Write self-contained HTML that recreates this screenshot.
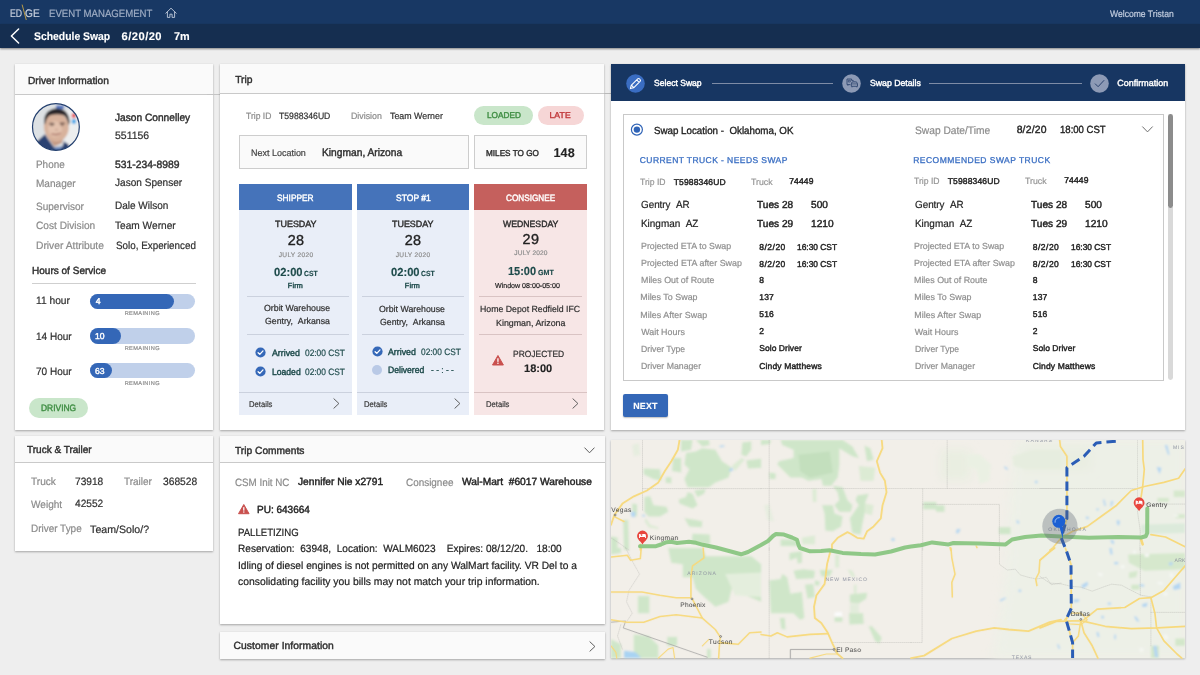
<!DOCTYPE html>
<html lang="en"><head><meta charset="utf-8"><title>Schedule Swap</title>
<style>
html,body{margin:0;padding:0}
body{width:1200px;height:675px;background:#eeeeee;position:relative;overflow:hidden;will-change:transform;text-rendering:geometricPrecision;font-family:"Liberation Sans",sans-serif;}
.t{position:absolute;white-space:pre;line-height:1;display:block;transform-origin:0 0}
.a{position:absolute;box-sizing:border-box}
.card{position:absolute;background:#fff;box-shadow:0 1px 2px rgba(0,0,0,.3),0 0 1px rgba(0,0,0,.07)}
.hd{position:absolute;left:0;top:0;right:0;background:#fafafa;border-bottom:1px solid #c9c9c9;box-sizing:border-box}
svg{position:absolute;overflow:visible}
</style></head><body>
<div class="a" style="left:0;top:0;width:1200px;height:24px;background:#183864"></div>
<div class="a" style="left:0;top:24px;width:1200px;height:24px;background:#152e50;box-shadow:0 1px 2px rgba(0,0,0,.45)"></div>
<span class="t" id="t0" style="left:10.09px;top:9.00px;font-size:11px;color:#ccd3df;-webkit-text-stroke:0.2px;transform:scaleX(0.7879);">ED</span>
<span class="t" id="t1" style="left:24.54px;top:9.00px;font-size:11px;color:#ccd3df;-webkit-text-stroke:0.2px;transform:scaleX(0.9204);">GE</span>
<svg style="left:0;top:0" width="60" height="24"><line x1="22.1" y1="4.6" x2="26.3" y2="20" stroke="#b89a45" stroke-width="1"/></svg>
<span class="t" id="t2" style="left:49.12px;top:9.00px;font-size:10.5px;color:#9fadc4;-webkit-text-stroke:0.2px;transform:scaleX(0.9152);">EVENT MANAGEMENT</span>
<svg style="left:165px;top:7px" width="12" height="12" viewBox="0 0 12 12"><path d="M0.8 6.2 L6 1.2 L11.2 6.2 M2.4 5 V10.4 H4.9 V7.2 H7.1 V10.4 H9.6 V5" fill="none" stroke="#c3cddd" stroke-width="0.9" stroke-linejoin="round" stroke-linecap="round"/></svg>
<span class="t" id="t3" style="left:1110.18px;top:10.00px;font-size:9.5px;color:#c3cddf;-webkit-text-stroke:0.2px;transform:scaleX(0.9037);">Welcome Tristan</span>
<svg style="left:8px;top:26px" width="14" height="20" viewBox="0 0 14 20"><path d="M10.6 3 L3.4 10 L10.6 17" fill="none" stroke="#fff" stroke-width="1.5" stroke-linecap="round" stroke-linejoin="round"/></svg>
<span class="t" id="t4" style="left:33.58px;top:32.00px;font-size:11.2px;color:#fff;font-weight:700;-webkit-text-stroke:0.12px;transform:scaleX(0.9284);">Schedule Swap</span>
<span class="t" id="t5" style="left:121.58px;top:32.00px;font-size:11.2px;color:#fff;font-weight:700;-webkit-text-stroke:0.12px;letter-spacing:0.446px;">6/20/20</span>
<span class="t" id="t6" style="left:173.58px;top:32.00px;font-size:11.2px;color:#fff;font-weight:700;-webkit-text-stroke:0.12px;transform:scaleX(0.9707);">7m</span>
<div class="card" style="left:15px;top:64px;width:198px;height:366px"><div class="hd" style="height:31px"></div></div>
<div class="a" style="left:207px;top:94px;width:14px;height:1px;background:#c4c4c4"></div>
<span class="t" id="t7" style="left:28.13px;top:77.00px;font-size:10.3px;color:#2f2f2f;-webkit-text-stroke:0.42px;transform:scaleX(0.9888);">Driver Information</span>
<svg style="left:31px;top:102px" width="50" height="50" viewBox="0 0 50 50">
<defs><clipPath id="avc"><circle cx="24.9" cy="25" r="23.3"/></clipPath><filter id="avb" x="-10%" y="-10%" width="120%" height="120%"><feGaussianBlur stdDeviation="0.8"/></filter></defs>
<g clip-path="url(#avc)"><g filter="url(#avb)">
<rect x="-2" y="-2" width="54" height="54" fill="#dde1e4"/>
<rect x="34" y="8" width="18" height="40" fill="#eceeef"/>
<rect x="25" y="3.4" width="8" height="3.4" fill="#4c70c0"/>
<rect x="40.8" y="11.2" width="4" height="4.8" rx="1.5" fill="#e8525c"/>
<rect x="40.8" y="17" width="4.2" height="4.8" rx="1.5" fill="#4ba9e8"/>
<path d="M-2 52 V44 L7 38.6 L14 32.3 L17 37 L23.3 45.7 L31.3 44.8 L33.1 39.4 L37.6 42.6 L39 52 Z" fill="#2c4372"/>
<path d="M15.5 31 L16.5 35 L23.3 44.6 L31 41 L33 33 Z" fill="#c39a84"/>
<path d="M23 45.2 L31.3 44.6 L30 48 L25 49 Z" fill="#5f7fb5"/>
<ellipse cx="25.3" cy="25" rx="12.4" ry="14.6" fill="#d8b29c" transform="rotate(-6 25.3 25)"/>
<ellipse cx="24" cy="27" rx="7" ry="8" fill="#e3c2ae" transform="rotate(-6 24 27)"/>
<path d="M13.6 22.5 Q11.5 9 24 6.6 Q37.5 5.6 38.6 20 L37.6 23.5 Q36.8 16.5 33.2 13.4 Q26 10.8 18.6 13.6 Q15 16.5 14.4 21.5 Z" fill="#2b2829"/>
<path d="M20.4 32 Q25.2 34.4 29.8 31.2 Q25.4 33 20.4 32Z" fill="#9c5f54" stroke="#9c5f54" stroke-width="0.6"/>
<path d="M18.4 21.9 Q20.8 20.9 23.3 21.9 M28.7 21.5 Q31.4 20.5 34 21.5" stroke="#4a342c" stroke-width="1.2" fill="none"/>
<path d="M19.4 23.3 h3 M29.6 23 h3" stroke="#3d2a25" stroke-width="0.9"/>
<path d="M24.4 27.6 q1 0.8 2.2 0" stroke="#a97d69" stroke-width="0.8" fill="none"/>
</g></g>
<circle cx="24.9" cy="25" r="23.4" fill="none" stroke="#233f6e" stroke-width="1.2"/></svg>
<span class="t" id="t8" style="left:114.61px;top:113.00px;font-size:10.6px;color:#2f2f2f;-webkit-text-stroke:0.42px;transform:scaleX(0.9597);">Jason Connelley</span>
<span class="t" id="t9" style="left:114.61px;top:131.00px;font-size:10.6px;color:#2f2f2f;-webkit-text-stroke:0.2px;transform:scaleX(0.9883);">551156</span>
<span class="t" id="t10" style="left:35.61px;top:160.00px;font-size:10.6px;color:#8b8b8b;-webkit-text-stroke:0.2px;transform:scaleX(0.9358);">Phone</span>
<span class="t" id="t11" style="left:114.61px;top:160.00px;font-size:10.6px;color:#2f2f2f;-webkit-text-stroke:0.42px;transform:scaleX(0.9764);">531-234-8989</span>
<span class="t" id="t12" style="left:35.61px;top:179.00px;font-size:10.6px;color:#8b8b8b;-webkit-text-stroke:0.2px;transform:scaleX(0.9489);">Manager</span>
<span class="t" id="t13" style="left:114.61px;top:178.00px;font-size:10.6px;color:#2f2f2f;-webkit-text-stroke:0.2px;transform:scaleX(0.9505);">Jason Spenser</span>
<span class="t" id="t14" style="left:35.61px;top:202.00px;font-size:10.6px;color:#8b8b8b;-webkit-text-stroke:0.2px;transform:scaleX(0.9464);">Supervisor</span>
<span class="t" id="t15" style="left:114.61px;top:201.00px;font-size:10.6px;color:#2f2f2f;-webkit-text-stroke:0.2px;transform:scaleX(0.9450);">Dale Wilson</span>
<span class="t" id="t16" style="left:35.61px;top:221.00px;font-size:10.6px;color:#8b8b8b;-webkit-text-stroke:0.2px;transform:scaleX(0.9571);">Cost Division</span>
<span class="t" id="t17" style="left:114.61px;top:221.00px;font-size:10.6px;color:#2f2f2f;-webkit-text-stroke:0.2px;transform:scaleX(0.9571);">Team Werner</span>
<span class="t" id="t18" style="left:35.61px;top:241.00px;font-size:10.6px;color:#8b8b8b;-webkit-text-stroke:0.2px;transform:scaleX(0.9695);">Driver Attribute</span>
<span class="t" id="t19" style="left:116.11px;top:241.00px;font-size:10.6px;color:#2f2f2f;-webkit-text-stroke:0.2px;transform:scaleX(0.9295);">Solo, Experienced</span>
<span class="t" id="t20" style="left:32.13px;top:267.00px;font-size:10.3px;color:#2f2f2f;-webkit-text-stroke:0.42px;transform:scaleX(0.9742);">Hours of Service</span>
<div class="a" style="left:32px;top:283px;width:164px;height:1px;background:#cfcfcf"></div>
<div class="a" style="left:89.5px;top:293.75px;width:105px;height:15.3px;border-radius:8px;background:#c0d0ea"></div>
<div class="a" style="left:89.5px;top:293.75px;width:84.3px;height:15.3px;border-radius:8px;background:#3467b7"></div>
<span class="t" id="t21" style="left:35.61px;top:296.00px;font-size:10.6px;color:#2f2f2f;-webkit-text-stroke:0.2px;transform:scaleX(0.9649);">11 hour</span>
<span class="t" id="t22" style="left:95.78px;top:297.00px;font-size:8.6px;color:#fff;-webkit-text-stroke:0.42px;">4</span>
<span class="t" id="t23" style="left:124.66px;top:312.00px;font-size:5.6px;color:#8e8e8e;-webkit-text-stroke:0.2px;letter-spacing:0.391px;">REMAINING</span>
<div class="a" style="left:89.5px;top:328.3px;width:105px;height:15.3px;border-radius:8px;background:#c0d0ea"></div>
<div class="a" style="left:89.5px;top:328.3px;width:31.3px;height:15.3px;border-radius:8px;background:#3467b7"></div>
<span class="t" id="t24" style="left:35.61px;top:332.00px;font-size:10.6px;color:#2f2f2f;-webkit-text-stroke:0.2px;transform:scaleX(0.9462);">14 Hour</span>
<span class="t" id="t25" style="left:94.98px;top:332.00px;font-size:8.6px;color:#fff;-webkit-text-stroke:0.42px;">10</span>
<span class="t" id="t26" style="left:124.66px;top:347.00px;font-size:5.6px;color:#8e8e8e;-webkit-text-stroke:0.2px;letter-spacing:0.391px;">REMAINING</span>
<div class="a" style="left:89.5px;top:362.5px;width:105px;height:15.3px;border-radius:8px;background:#c0d0ea"></div>
<div class="a" style="left:89.5px;top:362.5px;width:22px;height:15.3px;border-radius:8px;background:#3467b7"></div>
<span class="t" id="t27" style="left:35.61px;top:367.00px;font-size:10.6px;color:#2f2f2f;-webkit-text-stroke:0.2px;transform:scaleX(0.9462);">70 Hour</span>
<span class="t" id="t28" style="left:94.98px;top:367.00px;font-size:8.6px;color:#fff;-webkit-text-stroke:0.42px;">63</span>
<span class="t" id="t29" style="left:124.66px;top:382.00px;font-size:5.6px;color:#8e8e8e;-webkit-text-stroke:0.2px;letter-spacing:0.391px;">REMAINING</span>
<div class="a" style="left:29.2px;top:398px;width:58.6px;height:19.6px;border-radius:10px;background:#c9e6ca"></div>
<span class="t" id="t30" style="left:41.20px;top:404.00px;font-size:9.2px;color:#418f45;-webkit-text-stroke:0.42px;transform:scaleX(0.9170);">DRIVING</span>
<div class="card" style="left:15px;top:436px;width:198px;height:115px"><div class="hd" style="height:27px"></div></div>
<span class="t" id="t31" style="left:27.13px;top:446.00px;font-size:10.3px;color:#2f2f2f;-webkit-text-stroke:0.42px;transform:scaleX(0.9714);">Truck &amp; Trailer</span>
<span class="t" id="t32" style="left:30.61px;top:477.00px;font-size:10.6px;color:#8b8b8b;-webkit-text-stroke:0.2px;transform:scaleX(0.9552);">Truck</span>
<span class="t" id="t33" style="left:75.11px;top:477.00px;font-size:10.6px;color:#2f2f2f;-webkit-text-stroke:0.2px;transform:scaleX(0.9561);">73918</span>
<span class="t" id="t34" style="left:124.11px;top:477.00px;font-size:10.6px;color:#8b8b8b;-webkit-text-stroke:0.2px;transform:scaleX(0.9426);">Trailer</span>
<span class="t" id="t35" style="left:163.11px;top:477.00px;font-size:10.6px;color:#2f2f2f;-webkit-text-stroke:0.2px;transform:scaleX(0.9665);">368528</span>
<span class="t" id="t36" style="left:30.61px;top:500.00px;font-size:10.6px;color:#8b8b8b;-webkit-text-stroke:0.2px;transform:scaleX(0.9510);">Weight</span>
<span class="t" id="t37" style="left:75.11px;top:499.00px;font-size:10.6px;color:#2f2f2f;-webkit-text-stroke:0.2px;transform:scaleX(0.9561);">42552</span>
<span class="t" id="t38" style="left:30.61px;top:524.00px;font-size:10.6px;color:#8b8b8b;-webkit-text-stroke:0.2px;transform:scaleX(0.9390);">Driver Type</span>
<span class="t" id="t39" style="left:90.11px;top:525.00px;font-size:10.6px;color:#2f2f2f;-webkit-text-stroke:0.2px;letter-spacing:0.003px;">Team/Solo/?</span>
<div class="card" style="left:220px;top:64px;width:384px;height:366px"><div class="hd" style="height:30px"></div></div>
<div class="a" style="left:604px;top:93px;width:13px;height:1px;background:#b9b9b9"></div>
<span class="t" id="t40" style="left:235.13px;top:76.00px;font-size:10.3px;color:#2f2f2f;-webkit-text-stroke:0.42px;letter-spacing:0.013px;">Trip</span>
<span class="t" id="t41" style="left:245.70px;top:112.00px;font-size:9.2px;color:#8b8b8b;-webkit-text-stroke:0.2px;transform:scaleX(0.9315);">Trip ID</span>
<span class="t" id="t42" style="left:279.20px;top:112.00px;font-size:9.2px;color:#2f2f2f;-webkit-text-stroke:0.2px;transform:scaleX(0.9398);">T5988346UD</span>
<span class="t" id="t43" style="left:350.70px;top:112.00px;font-size:9.2px;color:#8b8b8b;-webkit-text-stroke:0.2px;transform:scaleX(0.9595);">Division</span>
<span class="t" id="t44" style="left:390.20px;top:112.00px;font-size:9.2px;color:#2f2f2f;-webkit-text-stroke:0.2px;transform:scaleX(0.9615);">Team Werner</span>
<div class="a" style="left:474.3px;top:105.5px;width:58.4px;height:19.6px;border-radius:10px;background:#c9e6ca"></div>
<span class="t" id="t45" style="left:487.23px;top:111.00px;font-size:8.6px;color:#418f45;-webkit-text-stroke:0.42px;transform:scaleX(0.9576);">LOADED</span>
<div class="a" style="left:537.5px;top:105.5px;width:46px;height:19.6px;border-radius:10px;background:#f6d6d6"></div>
<span class="t" id="t46" style="left:549.48px;top:111.00px;font-size:8.6px;color:#c23c3e;-webkit-text-stroke:0.42px;letter-spacing:0.121px;">LATE</span>
<div class="a" style="left:239px;top:135px;width:230px;height:34px;background:#fafafa;border:1px solid #cdcdcd"></div>
<div class="a" style="left:474px;top:135px;width:112.5px;height:34px;background:#fafafa;border:1px solid #cdcdcd"></div>
<span class="t" id="t47" style="left:250.69px;top:149.00px;font-size:9.3px;color:#444;-webkit-text-stroke:0.2px;transform:scaleX(0.9650);">Next Location</span>
<span class="t" id="t48" style="left:321.60px;top:148.00px;font-size:10.8px;color:#2f2f2f;-webkit-text-stroke:0.42px;transform:scaleX(0.9475);">Kingman, Arizona</span>
<span class="t" id="t49" style="left:485.73px;top:149.00px;font-size:8.6px;color:#2f2f2f;-webkit-text-stroke:0.42px;transform:scaleX(0.9511);">MILES TO GO</span>
<span class="t" id="t50" style="left:553.49px;top:147.00px;font-size:12.6px;color:#222;font-weight:700;-webkit-text-stroke:0.12px;letter-spacing:0.079px;">148</span>
<div class="a" style="left:239.2px;top:184.2px;width:112.5px;height:231.2px;background:#e9eef8"></div>
<div class="a" style="left:239.2px;top:184.2px;width:112.5px;height:26px;background:#4573ba"></div>
<span class="t" id="t51" style="left:277.20px;top:194.00px;font-size:9.2px;color:#fff;-webkit-text-stroke:0.42px;transform:scaleX(0.9076);">SHIPPER</span>
<div class="a" style="left:246.7px;top:295.5px;width:102.4px;height:1px;background:#cbd1de"></div>
<div class="a" style="left:246.7px;top:334px;width:102.4px;height:1px;background:#cbd1de"></div>
<div class="a" style="left:239.2px;top:392px;width:112.5px;height:1px;background:#cbd1de"></div>
<div class="a" style="left:356.8px;top:184.2px;width:112.3px;height:231.2px;background:#e9eef8"></div>
<div class="a" style="left:356.8px;top:184.2px;width:112.3px;height:26px;background:#4573ba"></div>
<span class="t" id="t52" style="left:396.20px;top:194.00px;font-size:9.2px;color:#fff;-webkit-text-stroke:0.42px;transform:scaleX(0.9306);">STOP #1</span>
<div class="a" style="left:362px;top:295.5px;width:102.4px;height:1px;background:#cbd1de"></div>
<div class="a" style="left:362px;top:334px;width:102.4px;height:1px;background:#cbd1de"></div>
<div class="a" style="left:356.8px;top:392px;width:112.3px;height:1px;background:#cbd1de"></div>
<div class="a" style="left:474.3px;top:184.2px;width:112.5px;height:231.2px;background:#f7e6e6"></div>
<div class="a" style="left:474.3px;top:184.2px;width:112.5px;height:26px;background:#c5605d"></div>
<span class="t" id="t53" style="left:506.20px;top:194.00px;font-size:9.2px;color:#fff;-webkit-text-stroke:0.42px;transform:scaleX(0.8908);">CONSIGNEE</span>
<div class="a" style="left:479.4px;top:295.5px;width:102.4px;height:1px;background:#d9c3c3"></div>
<div class="a" style="left:479.4px;top:334px;width:102.4px;height:1px;background:#d9c3c3"></div>
<div class="a" style="left:474.3px;top:392px;width:112.5px;height:1px;background:#d9c3c3"></div>
<span class="t" id="t54" style="left:275.21px;top:220.00px;font-size:9.0px;color:#2f2f2f;-webkit-text-stroke:0.42px;transform:scaleX(0.9932);">TUESDAY</span>
<span class="t" id="t55" style="left:287.69px;top:234.00px;font-size:14.4px;color:#222;letter-spacing:0.380px;-webkit-text-stroke:0.35px #222;">28</span>
<span class="t" id="t56" style="left:278.75px;top:253.00px;font-size:6.6px;color:#8d8d8d;-webkit-text-stroke:0.2px;letter-spacing:0.294px;">JULY 2020</span>
<span class="t" id="t57" style="left:273.85px;top:267.00px;font-size:11.7px;color:#1d4a4a;font-weight:700;-webkit-text-stroke:0.12px;transform:scaleX(0.9553);">02:00</span>
<span class="t" id="t58" style="left:303.86px;top:270.00px;font-size:7.4px;color:#1d4a4a;font-weight:700;-webkit-text-stroke:0.12px;transform:scaleX(0.9256);">CST</span>
<span class="t" id="t59" style="left:287.87px;top:282.00px;font-size:7.2px;color:#1d4a4a;-webkit-text-stroke:0.42px;letter-spacing:0.178px;">Firm</span>
<span class="t" id="t60" style="left:264.22px;top:304.00px;font-size:8.9px;color:#2f2f2f;-webkit-text-stroke:0.2px;transform:scaleX(0.9909);">Orbit Warehouse</span>
<span class="t" id="t61" style="left:265.02px;top:317.00px;font-size:8.9px;color:#2f2f2f;-webkit-text-stroke:0.2px;transform:scaleX(0.9836);">Gentry, &nbsp;Arkansa</span>
<span class="t" id="t62" style="left:392.21px;top:220.00px;font-size:9.0px;color:#2f2f2f;-webkit-text-stroke:0.42px;transform:scaleX(0.9908);">TUESDAY</span>
<span class="t" id="t63" style="left:404.69px;top:234.00px;font-size:14.4px;color:#222;letter-spacing:0.380px;-webkit-text-stroke:0.35px #222;">28</span>
<span class="t" id="t64" style="left:395.75px;top:253.00px;font-size:6.6px;color:#8d8d8d;-webkit-text-stroke:0.2px;letter-spacing:0.294px;">JULY 2020</span>
<span class="t" id="t65" style="left:390.85px;top:267.00px;font-size:11.7px;color:#1d4a4a;font-weight:700;-webkit-text-stroke:0.12px;transform:scaleX(0.9553);">02:00</span>
<span class="t" id="t66" style="left:420.86px;top:270.00px;font-size:7.4px;color:#1d4a4a;font-weight:700;-webkit-text-stroke:0.12px;transform:scaleX(0.9256);">CST</span>
<span class="t" id="t67" style="left:404.87px;top:282.00px;font-size:7.2px;color:#1d4a4a;-webkit-text-stroke:0.42px;letter-spacing:0.178px;">Firm</span>
<span class="t" id="t68" style="left:379.22px;top:305.00px;font-size:8.9px;color:#2f2f2f;-webkit-text-stroke:0.2px;transform:scaleX(0.9879);">Orbit Warehouse</span>
<span class="t" id="t69" style="left:380.22px;top:318.00px;font-size:8.9px;color:#2f2f2f;-webkit-text-stroke:0.2px;transform:scaleX(0.9836);">Gentry, &nbsp;Arkansa</span>
<span class="t" id="t70" style="left:503.41px;top:220.00px;font-size:9.0px;color:#2f2f2f;-webkit-text-stroke:0.42px;transform:scaleX(0.9654);">WEDNESDAY</span>
<span class="t" id="t71" style="left:522.49px;top:233.00px;font-size:14.4px;color:#222;letter-spacing:0.430px;-webkit-text-stroke:0.35px #222;">29</span>
<span class="t" id="t72" style="left:514.35px;top:251.00px;font-size:6.6px;color:#8d8d8d;-webkit-text-stroke:0.2px;letter-spacing:0.139px;">JULY 2020</span>
<span class="t" id="t73" style="left:507.70px;top:266.00px;font-size:11.7px;color:#1d4a4a;font-weight:700;-webkit-text-stroke:0.12px;transform:scaleX(0.9385);">15:00</span>
<span class="t" id="t74" style="left:537.86px;top:269.00px;font-size:7.4px;color:#1d4a4a;font-weight:700;-webkit-text-stroke:0.12px;transform:scaleX(0.9619);">GMT</span>
<span class="t" id="t75" style="left:494.52px;top:282.00px;font-size:7.2px;color:#222;transform:scaleX(0.9841);-webkit-text-stroke:0.18px #222;">Window 08:00-05:00</span>
<span class="t" id="t76" style="left:480.42px;top:305.00px;font-size:8.9px;color:#2f2f2f;-webkit-text-stroke:0.2px;transform:scaleX(0.9846);">Home Depot Redfield IFC</span>
<span class="t" id="t77" style="left:496.02px;top:319.00px;font-size:8.9px;color:#2f2f2f;-webkit-text-stroke:0.2px;transform:scaleX(0.9985);">Kingman, Arizona</span>
<svg style="left:255.2px;top:347.1px" width="11" height="11" viewBox="0 0 11 11"><circle cx="5.5" cy="5.5" r="5.1" fill="#3568b8"/><path d="M3.1 5.7 L4.8 7.4 L8 3.9" fill="none" stroke="#fff" stroke-width="1.3" stroke-linecap="round" stroke-linejoin="round"/></svg>
<svg style="left:255.2px;top:366.2px" width="11" height="11" viewBox="0 0 11 11"><circle cx="5.5" cy="5.5" r="5.1" fill="#3568b8"/><path d="M3.1 5.7 L4.8 7.4 L8 3.9" fill="none" stroke="#fff" stroke-width="1.3" stroke-linecap="round" stroke-linejoin="round"/></svg>
<span class="t" id="t78" style="left:272.20px;top:349.00px;font-size:9.2px;color:#1d4a4a;-webkit-text-stroke:0.42px;transform:scaleX(0.9574);">Arrived</span>
<span class="t" id="t79" style="left:305.20px;top:349.00px;font-size:9.2px;color:#1d4a4a;-webkit-text-stroke:0.2px;transform:scaleX(0.9100);">02:00 CST</span>
<span class="t" id="t80" style="left:272.20px;top:368.00px;font-size:9.2px;color:#1d4a4a;-webkit-text-stroke:0.42px;transform:scaleX(0.9347);">Loaded</span>
<span class="t" id="t81" style="left:305.40px;top:368.00px;font-size:9.2px;color:#1d4a4a;-webkit-text-stroke:0.2px;transform:scaleX(0.9100);">02:00 CST</span>
<svg style="left:371.9px;top:346.2px" width="11" height="11" viewBox="0 0 11 11"><circle cx="5.5" cy="5.5" r="5.1" fill="#3568b8"/><path d="M3.1 5.7 L4.8 7.4 L8 3.9" fill="none" stroke="#fff" stroke-width="1.3" stroke-linecap="round" stroke-linejoin="round"/></svg>
<div class="a" style="left:371.7px;top:365px;width:10px;height:10px;border-radius:5px;background:#b9c9e6"></div>
<span class="t" id="t82" style="left:387.75px;top:348.00px;font-size:9.2px;color:#1d4a4a;-webkit-text-stroke:0.42px;transform:scaleX(0.9574);">Arrived</span>
<span class="t" id="t83" style="left:420.80px;top:348.00px;font-size:9.2px;color:#1d4a4a;-webkit-text-stroke:0.2px;transform:scaleX(0.9054);">02:00 CST</span>
<span class="t" id="t84" style="left:387.75px;top:366.00px;font-size:9.2px;color:#1d4a4a;-webkit-text-stroke:0.42px;transform:scaleX(0.9344);">Delivered</span>
<span class="t" id="t85" style="left:431.20px;top:366.00px;font-size:9.2px;color:#1d4a4a;-webkit-text-stroke:0.2px;transform:scaleX(0.9141);">- - : - -</span>
<svg style="left:491.5px;top:354.7px" width="11.9" height="10.5" viewBox="0 0 12 10.6"><path d="M6 0.5 L11.5 10.1 H0.5 Z" fill="#c9504e" stroke="#c9504e" stroke-width="1" stroke-linejoin="round"/><rect x="5.35" y="3.3" width="1.3" height="3.6" fill="#fff"/><rect x="5.35" y="7.7" width="1.3" height="1.3" fill="#fff"/></svg>
<span class="t" id="t86" style="left:512.86px;top:350.00px;font-size:9.0px;color:#2f2f2f;-webkit-text-stroke:0.2px;transform:scaleX(0.9384);">PROJECTED</span>
<span class="t" id="t87" style="left:524.09px;top:364.00px;font-size:11px;color:#222;font-weight:700;-webkit-text-stroke:0.12px;">18:00</span>
<span class="t" id="t88" style="left:248.76px;top:401.00px;font-size:8.2px;color:#3a3a3a;-webkit-text-stroke:0.2px;transform:scaleX(0.9360);">Details</span>
<svg style="left:333.2px;top:398.3px" width="7" height="11" viewBox="0 0 7 11"><path d="M0.9 0.8 L5.9 5.5 L0.9 10.2" fill="none" stroke="#555" stroke-width="0.95" stroke-linecap="round" stroke-linejoin="round"/></svg>
<span class="t" id="t89" style="left:363.91px;top:401.00px;font-size:8.2px;color:#3a3a3a;-webkit-text-stroke:0.2px;transform:scaleX(0.9360);">Details</span>
<svg style="left:453.8px;top:398.3px" width="7" height="11" viewBox="0 0 7 11"><path d="M0.9 0.8 L5.9 5.5 L0.9 10.2" fill="none" stroke="#555" stroke-width="0.95" stroke-linecap="round" stroke-linejoin="round"/></svg>
<span class="t" id="t90" style="left:485.86px;top:401.00px;font-size:8.2px;color:#3a3a3a;-webkit-text-stroke:0.2px;transform:scaleX(0.9360);">Details</span>
<svg style="left:571.6px;top:398.3px" width="7" height="11" viewBox="0 0 7 11"><path d="M0.9 0.8 L5.9 5.5 L0.9 10.2" fill="none" stroke="#555" stroke-width="0.95" stroke-linecap="round" stroke-linejoin="round"/></svg>
<div class="card" style="left:220px;top:436px;width:385px;height:188px"><div class="hd" style="height:27px"></div></div>
<span class="t" id="t91" style="left:235.13px;top:447.00px;font-size:10.3px;color:#2f2f2f;-webkit-text-stroke:0.42px;transform:scaleX(0.9916);">Trip Comments</span>
<svg style="left:584px;top:447px" width="11" height="7" viewBox="0 0 11 7"><path d="M0.8 0.9 L5.5 5.8 L10.2 0.9" fill="none" stroke="#555" stroke-width="0.95" stroke-linecap="round" stroke-linejoin="round"/></svg>
<span class="t" id="t92" style="left:235.11px;top:478.00px;font-size:10.6px;color:#8b8b8b;-webkit-text-stroke:0.2px;transform:scaleX(0.9244);">CSM Init NC</span>
<span class="t" id="t93" style="left:297.63px;top:478.00px;font-size:10.4px;color:#222;-webkit-text-stroke:0.42px;transform:scaleX(0.9828);">Jennifer Nie x2791</span>
<span class="t" id="t94" style="left:406.11px;top:478.00px;font-size:10.6px;color:#8b8b8b;-webkit-text-stroke:0.2px;transform:scaleX(0.9362);">Consignee</span>
<span class="t" id="t95" style="left:462.13px;top:478.00px;font-size:10.4px;color:#222;-webkit-text-stroke:0.42px;transform:scaleX(0.9837);">Wal-Mart &nbsp;#6017 Warehouse</span>
<svg style="left:237.6px;top:503.8px" width="11.6" height="10.2" viewBox="0 0 12 10.6"><path d="M6 0.5 L11.5 10.1 H0.5 Z" fill="#c9504e" stroke="#c9504e" stroke-width="1" stroke-linejoin="round"/><rect x="5.35" y="3.3" width="1.3" height="3.6" fill="#fff"/><rect x="5.35" y="7.7" width="1.3" height="1.3" fill="#fff"/></svg>
<span class="t" id="t96" style="left:257.13px;top:506.00px;font-size:10.4px;color:#222;-webkit-text-stroke:0.42px;transform:scaleX(0.9640);">PU: 643664</span>
<span class="t" id="t97" style="left:237.62px;top:528.00px;font-size:10.5px;color:#222;-webkit-text-stroke:0.2px;transform:scaleX(0.9147);">PALLETIZING</span>
<span class="t" id="t98" style="left:237.62px;top:544.00px;font-size:10.5px;color:#222;-webkit-text-stroke:0.2px;transform:scaleX(0.9605);">Reservation: &nbsp;63948, &nbsp;Location: &nbsp;WALM6023 &nbsp; &nbsp;Expires: 08/12/20. &nbsp; 18:00</span>
<span class="t" id="t99" style="left:237.62px;top:561.00px;font-size:10.5px;color:#222;-webkit-text-stroke:0.2px;transform:scaleX(0.9727);">Idling of diesel engines is not permitted on any WalMart facility. VR Del to a</span>
<span class="t" id="t100" style="left:237.62px;top:577.00px;font-size:10.5px;color:#222;-webkit-text-stroke:0.2px;transform:scaleX(0.9902);">consolidating facility you bills may not match your trip information.</span>
<div class="card" style="left:220px;top:632px;width:385px;height:27px;background:#fafafa"></div>
<span class="t" id="t101" style="left:233.53px;top:642.00px;font-size:10.3px;color:#2f2f2f;-webkit-text-stroke:0.42px;letter-spacing:0.070px;">Customer Information</span>
<svg style="left:589px;top:640.5px" width="7" height="11" viewBox="0 0 7 11"><path d="M0.9 0.8 L5.9 5.5 L0.9 10.2" fill="none" stroke="#555" stroke-width="0.95" stroke-linecap="round" stroke-linejoin="round"/></svg>
<div class="card" style="left:611px;top:64px;width:574px;height:366px"></div>
<div class="a" style="left:611px;top:64px;width:574px;height:37px;background:#173662"></div>
<svg style="left:626px;top:73.5px" width="19" height="19" viewBox="0 0 19 19"><circle cx="9.5" cy="9.5" r="9.3" fill="#3a6dc2"/>
<path d="M4.4 14.6 L5.2 11.4 L11.7 4.9 Q12.6 4 13.5 4.9 L14.1 5.5 Q15 6.4 14.1 7.3 L7.6 13.8 Z M5.9 11.7 L7.3 13.1 M10.7 5.9 L13.1 8.3" fill="none" stroke="#fff" stroke-width="1.05" stroke-linejoin="round" stroke-linecap="round"/></svg>
<span class="t" id="t102" style="left:654.22px;top:79.00px;font-size:8.9px;color:#fff;-webkit-text-stroke:0.42px;transform:scaleX(0.9648);">Select Swap</span>
<div class="a" style="left:711.7px;top:83px;width:121.5px;height:1px;background:#7e8ca6"></div>
<svg style="left:842px;top:73.5px" width="19" height="19" viewBox="0 0 19 19"><circle cx="9.5" cy="9.5" r="9.3" fill="#8d9ab5"/>
<g fill="none" stroke="#2b426d" stroke-width="0.85" stroke-linejoin="round">
<path d="M5 10.6 V5 H9.6 V6.4 H11.2 L12 7.6"/><path d="M6.3 6.3 H8.3 V8 H6.3Z" stroke-width="0.7"/><path d="M5 10.6 H8.4"/>
<path d="M9.3 12.3 V9.9 L10.2 7.9 H14.5 L15.5 9.9 V12.3 Z" fill="#8d9ab5"/><path d="M9.5 9.9 H15.3" stroke-width="0.7"/>
<path d="M10 12.4 V13.2 M14.8 12.4 V13.2 M5.9 10.8 V11.5" stroke-width="1.1"/></g></svg>
<span class="t" id="t103" style="left:870.22px;top:79.00px;font-size:8.9px;color:#fff;-webkit-text-stroke:0.42px;transform:scaleX(0.9818);">Swap Details</span>
<div class="a" style="left:928.7px;top:83px;width:153.8px;height:1px;background:#7e8ca6"></div>
<svg style="left:1090px;top:73.5px" width="19" height="19" viewBox="0 0 19 19"><circle cx="9.5" cy="9.5" r="9.3" fill="#8d9ab5"/>
<path d="M5.3 9.9 L8.1 12.7 L13.9 6.5" fill="none" stroke="#2b426d" stroke-width="1" stroke-linecap="round" stroke-linejoin="round"/></svg>
<span class="t" id="t104" style="left:1117.22px;top:79.00px;font-size:8.9px;color:#fff;-webkit-text-stroke:0.42px;letter-spacing:0.066px;">Confirmation</span>
<div class="a" style="left:623px;top:114px;width:540.5px;height:266.5px;border:1px solid #c9c9c9;background:#fff"></div>
<div class="a" style="left:1168.2px;top:207px;width:4.8px;height:173px;border-radius:0 0 2.4px 2.4px;background:#d9d9d9"></div>
<div class="a" style="left:1168.2px;top:114px;width:4.8px;height:94px;border-radius:2.4px;background:#8c8c8c"></div>
<svg style="left:630px;top:123px" width="14" height="14" viewBox="0 0 14 14"><circle cx="6.9" cy="6.6" r="5.5" fill="#fff" stroke="#2f63b6" stroke-width="1.2"/><circle cx="6.9" cy="6.6" r="3.2" fill="#2f63b6"/></svg>
<span class="t" id="t105" style="left:654.13px;top:127.00px;font-size:10.3px;color:#1f1f1f;-webkit-text-stroke:0.3px;transform:scaleX(0.9478);-webkit-text-stroke:0.36px #1f1f1f;">Swap Location - &nbsp;Oklahoma, OK</span>
<span class="t" id="t106" style="left:914.60px;top:126.00px;font-size:10.9px;color:#8b8b8b;-webkit-text-stroke:0.2px;transform:scaleX(0.9385);">Swap Date/Time</span>
<span class="t" id="t107" style="left:1016.63px;top:126.00px;font-size:10.4px;color:#1f1f1f;letter-spacing:0.213px;-webkit-text-stroke:0.36px #1f1f1f;">8/2/20</span>
<span class="t" id="t108" style="left:1060.13px;top:126.00px;font-size:10.4px;color:#1f1f1f;transform:scaleX(0.9194);-webkit-text-stroke:0.36px #1f1f1f;">18:00 CST</span>
<svg style="left:1141.5px;top:126.3px" width="11" height="7" viewBox="0 0 11 7"><path d="M0.6 0.8 L5.5 5.9 L10.4 0.8" fill="none" stroke="#666" stroke-width="0.95" stroke-linecap="round" stroke-linejoin="round"/></svg>
<span class="t" id="t109" style="left:639.74px;top:156.00px;font-size:8.5px;color:#3b6fc3;-webkit-text-stroke:0.3px;letter-spacing:0.434px;">CURRENT TRUCK - NEEDS SWAP</span>
<span class="t" id="t110" style="left:639.71px;top:178.00px;font-size:9.0px;color:#959595;-webkit-text-stroke:0.2px;transform:scaleX(0.9602);">Trip ID</span>
<span class="t" id="t111" style="left:673.74px;top:178.00px;font-size:8.5px;color:#222;-webkit-text-stroke:0.42px;letter-spacing:0.153px;">T5988346UD</span>
<span class="t" id="t112" style="left:751.21px;top:178.00px;font-size:9.0px;color:#959595;-webkit-text-stroke:0.2px;transform:scaleX(0.9747);">Truck</span>
<span class="t" id="t113" style="left:789.24px;top:177.00px;font-size:8.5px;color:#222;-webkit-text-stroke:0.42px;letter-spacing:0.140px;">74449</span>
<span class="t" id="t114" style="left:641.13px;top:201.00px;font-size:10.4px;color:#222;-webkit-text-stroke:0.2px;transform:scaleX(0.9470);">Gentry &nbsp;AR</span>
<span class="t" id="t115" style="left:757.14px;top:201.00px;font-size:10.2px;color:#222;-webkit-text-stroke:0.42px;transform:scaleX(0.9923);">Tues 28</span>
<span class="t" id="t116" style="left:811.14px;top:201.00px;font-size:10.2px;color:#222;-webkit-text-stroke:0.42px;transform:scaleX(0.9946);">500</span>
<span class="t" id="t117" style="left:641.13px;top:220.00px;font-size:10.4px;color:#222;-webkit-text-stroke:0.2px;transform:scaleX(0.9559);">Kingman &nbsp;AZ</span>
<span class="t" id="t118" style="left:757.14px;top:220.00px;font-size:10.2px;color:#222;-webkit-text-stroke:0.42px;transform:scaleX(0.9923);">Tues 29</span>
<span class="t" id="t119" style="left:811.14px;top:220.00px;font-size:10.2px;color:#222;-webkit-text-stroke:0.42px;transform:scaleX(0.9994);">1210</span>
<span class="t" id="t120" style="left:640.72px;top:242.00px;font-size:8.9px;color:#8f8f8f;-webkit-text-stroke:0.2px;transform:scaleX(0.9944);">Projected ETA to Swap</span>
<span class="t" id="t121" style="left:759.24px;top:243.00px;font-size:8.5px;color:#222;-webkit-text-stroke:0.42px;letter-spacing:0.492px;">8/2/20</span>
<span class="t" id="t122" style="left:796.74px;top:243.00px;font-size:8.5px;color:#222;-webkit-text-stroke:0.42px;transform:scaleX(0.9865);">16:30 CST</span>
<span class="t" id="t123" style="left:640.72px;top:259.00px;font-size:8.9px;color:#8f8f8f;-webkit-text-stroke:0.2px;transform:scaleX(0.9989);">Projected ETA after Swap</span>
<span class="t" id="t124" style="left:759.24px;top:260.00px;font-size:8.5px;color:#222;-webkit-text-stroke:0.42px;letter-spacing:0.492px;">8/2/20</span>
<span class="t" id="t125" style="left:796.74px;top:260.00px;font-size:8.5px;color:#222;-webkit-text-stroke:0.42px;transform:scaleX(0.9865);">16:30 CST</span>
<span class="t" id="t126" style="left:640.72px;top:276.00px;font-size:8.9px;color:#8f8f8f;-webkit-text-stroke:0.2px;transform:scaleX(0.9980);">Miles Out of Route</span>
<span class="t" id="t127" style="left:759.24px;top:276.00px;font-size:8.5px;color:#222;-webkit-text-stroke:0.42px;">8</span>
<span class="t" id="t128" style="left:640.22px;top:293.00px;font-size:8.9px;color:#8f8f8f;-webkit-text-stroke:0.2px;letter-spacing:0.023px;">Miles To Swap</span>
<span class="t" id="t129" style="left:759.24px;top:293.00px;font-size:8.5px;color:#222;-webkit-text-stroke:0.42px;letter-spacing:0.217px;">137</span>
<span class="t" id="t130" style="left:640.22px;top:311.00px;font-size:8.9px;color:#8f8f8f;-webkit-text-stroke:0.2px;letter-spacing:0.063px;">Miles After Swap</span>
<span class="t" id="t131" style="left:759.24px;top:310.00px;font-size:8.5px;color:#222;-webkit-text-stroke:0.42px;letter-spacing:0.217px;">516</span>
<span class="t" id="t132" style="left:641.22px;top:328.00px;font-size:8.9px;color:#8f8f8f;-webkit-text-stroke:0.2px;letter-spacing:0.004px;">Wait Hours</span>
<span class="t" id="t133" style="left:759.24px;top:327.00px;font-size:8.5px;color:#222;-webkit-text-stroke:0.42px;">2</span>
<span class="t" id="t134" style="left:641.22px;top:345.00px;font-size:8.9px;color:#8f8f8f;-webkit-text-stroke:0.2px;transform:scaleX(0.9754);">Driver Type</span>
<span class="t" id="t135" style="left:759.24px;top:344.00px;font-size:8.5px;color:#222;-webkit-text-stroke:0.42px;letter-spacing:0.049px;">Solo Driver</span>
<span class="t" id="t136" style="left:641.22px;top:362.00px;font-size:8.9px;color:#8f8f8f;-webkit-text-stroke:0.2px;transform:scaleX(0.9826);">Driver Manager</span>
<span class="t" id="t137" style="left:759.24px;top:362.00px;font-size:8.5px;color:#222;-webkit-text-stroke:0.42px;letter-spacing:0.152px;">Cindy Matthews</span>
<span class="t" id="t138" style="left:913.24px;top:156.00px;font-size:8.5px;color:#3b6fc3;-webkit-text-stroke:0.3px;letter-spacing:0.475px;">RECOMMENDED SWAP TRUCK</span>
<span class="t" id="t139" style="left:913.71px;top:177.00px;font-size:9.0px;color:#959595;-webkit-text-stroke:0.2px;transform:scaleX(0.9602);">Trip ID</span>
<span class="t" id="t140" style="left:947.74px;top:177.00px;font-size:8.5px;color:#222;-webkit-text-stroke:0.42px;letter-spacing:0.153px;">T5988346UD</span>
<span class="t" id="t141" style="left:1025.21px;top:177.00px;font-size:9.0px;color:#959595;-webkit-text-stroke:0.2px;transform:scaleX(0.9747);">Truck</span>
<span class="t" id="t142" style="left:1064.24px;top:176.00px;font-size:8.5px;color:#222;-webkit-text-stroke:0.42px;letter-spacing:0.140px;">74449</span>
<span class="t" id="t143" style="left:914.63px;top:201.00px;font-size:10.4px;color:#222;-webkit-text-stroke:0.2px;transform:scaleX(0.9470);">Gentry &nbsp;AR</span>
<span class="t" id="t144" style="left:1030.64px;top:201.00px;font-size:10.2px;color:#222;-webkit-text-stroke:0.42px;transform:scaleX(0.9923);">Tues 28</span>
<span class="t" id="t145" style="left:1084.64px;top:201.00px;font-size:10.2px;color:#222;-webkit-text-stroke:0.42px;transform:scaleX(0.9946);">500</span>
<span class="t" id="t146" style="left:914.63px;top:220.00px;font-size:10.4px;color:#222;-webkit-text-stroke:0.2px;transform:scaleX(0.9559);">Kingman &nbsp;AZ</span>
<span class="t" id="t147" style="left:1030.64px;top:220.00px;font-size:10.2px;color:#222;-webkit-text-stroke:0.42px;transform:scaleX(0.9923);">Tues 29</span>
<span class="t" id="t148" style="left:1084.64px;top:220.00px;font-size:10.2px;color:#222;-webkit-text-stroke:0.42px;transform:scaleX(0.9994);">1210</span>
<span class="t" id="t149" style="left:914.22px;top:242.00px;font-size:8.9px;color:#8f8f8f;-webkit-text-stroke:0.2px;transform:scaleX(0.9944);">Projected ETA to Swap</span>
<span class="t" id="t150" style="left:1032.74px;top:243.00px;font-size:8.5px;color:#222;-webkit-text-stroke:0.42px;letter-spacing:0.492px;">8/2/20</span>
<span class="t" id="t151" style="left:1071.24px;top:243.00px;font-size:8.5px;color:#222;-webkit-text-stroke:0.42px;transform:scaleX(0.9865);">16:30 CST</span>
<span class="t" id="t152" style="left:914.22px;top:259.00px;font-size:8.9px;color:#8f8f8f;-webkit-text-stroke:0.2px;transform:scaleX(0.9989);">Projected ETA after Swap</span>
<span class="t" id="t153" style="left:1032.74px;top:260.00px;font-size:8.5px;color:#222;-webkit-text-stroke:0.42px;letter-spacing:0.492px;">8/2/20</span>
<span class="t" id="t154" style="left:1071.24px;top:260.00px;font-size:8.5px;color:#222;-webkit-text-stroke:0.42px;transform:scaleX(0.9865);">16:30 CST</span>
<span class="t" id="t155" style="left:914.22px;top:276.00px;font-size:8.9px;color:#8f8f8f;-webkit-text-stroke:0.2px;transform:scaleX(0.9980);">Miles Out of Route</span>
<span class="t" id="t156" style="left:1032.74px;top:276.00px;font-size:8.5px;color:#222;-webkit-text-stroke:0.42px;">8</span>
<span class="t" id="t157" style="left:914.22px;top:293.00px;font-size:8.9px;color:#8f8f8f;-webkit-text-stroke:0.2px;letter-spacing:0.023px;">Miles To Swap</span>
<span class="t" id="t158" style="left:1032.74px;top:293.00px;font-size:8.5px;color:#222;-webkit-text-stroke:0.42px;letter-spacing:0.217px;">137</span>
<span class="t" id="t159" style="left:914.22px;top:311.00px;font-size:8.9px;color:#8f8f8f;-webkit-text-stroke:0.2px;letter-spacing:0.063px;">Miles After Swap</span>
<span class="t" id="t160" style="left:1032.74px;top:310.00px;font-size:8.5px;color:#222;-webkit-text-stroke:0.42px;letter-spacing:0.217px;">516</span>
<span class="t" id="t161" style="left:914.72px;top:328.00px;font-size:8.9px;color:#8f8f8f;-webkit-text-stroke:0.2px;letter-spacing:0.004px;">Wait Hours</span>
<span class="t" id="t162" style="left:1032.74px;top:327.00px;font-size:8.5px;color:#222;-webkit-text-stroke:0.42px;">2</span>
<span class="t" id="t163" style="left:914.72px;top:345.00px;font-size:8.9px;color:#8f8f8f;-webkit-text-stroke:0.2px;transform:scaleX(0.9754);">Driver Type</span>
<span class="t" id="t164" style="left:1032.74px;top:344.00px;font-size:8.5px;color:#222;-webkit-text-stroke:0.42px;letter-spacing:0.049px;">Solo Driver</span>
<span class="t" id="t165" style="left:914.72px;top:362.00px;font-size:8.9px;color:#8f8f8f;-webkit-text-stroke:0.2px;transform:scaleX(0.9826);">Driver Manager</span>
<span class="t" id="t166" style="left:1032.74px;top:362.00px;font-size:8.5px;color:#222;-webkit-text-stroke:0.42px;letter-spacing:0.152px;">Cindy Matthews</span>
<div class="a" style="left:623px;top:394px;width:45px;height:22.8px;border-radius:2px;background:#3467b7;box-shadow:0 1px 1.5px rgba(0,0,0,.25)"></div>
<span class="t" id="t167" style="left:633.22px;top:402.00px;font-size:8.9px;color:#fff;font-weight:700;-webkit-text-stroke:0.12px;letter-spacing:0.171px;">NEXT</span>
<svg style="left:611px;top:440px;box-shadow:0 1px 2px rgba(0,0,0,.3)" width="574" height="218.3" viewBox="0 0 574 218.3">
<defs><clipPath id="mc"><rect x="0" y="0" width="574" height="218.3"/></clipPath>
<filter id="mb0" x="-5%" y="-5%" width="110%" height="110%"><feGaussianBlur stdDeviation="0.9"/></filter>
<filter id="mb1" x="-5%" y="-5%" width="110%" height="110%"><feGaussianBlur stdDeviation="0.55"/></filter>
<filter id="mb2" x="-5%" y="-5%" width="110%" height="110%"><feGaussianBlur stdDeviation="0.4"/></filter>
<filter id="mb3" x="-20%" y="-20%" width="140%" height="140%"><feGaussianBlur stdDeviation="5"/></filter></defs>
<g clip-path="url(#mc)" style="overflow:hidden">
<rect x="0" y="0" width="574" height="218.3" fill="#f2efe9"/>
<g filter="url(#mb0)">
<path d="M405 0 C 395 60 400 110 392 150 C 388 190 385 205 380 218 H574 V0 Z" fill="#edf0e7" filter="url(#mb3)"/>
<path d="M330 10 h30 v30 h-30z M410 8 h70 v22 h-70z" fill="#e9eee1" filter="url(#mb3)"/>
<polygon points="75.0,13.0 84.8,11.4 91.3,8.2 104.3,9.8 110.9,21.2 120.7,27.7 117.4,37.5 104.3,42.4 97.8,47.3 76.6,47.3 73.4,39.1 78.3,29.3 73.4,24.5" fill="#cfe6c9"/>
<polygon points="32.6,28.5 48.9,29.3 50.5,40.8 42.4,39.1 32.6,34.2" fill="#cfe6c9"/>
<polygon points="62.0,17.9 70.1,17.9 70.1,32.6 61.1,31.0" fill="#cfe6c9"/>
<polygon points="54.6,37.2 60.3,37.2 60.3,43.2 54.6,42.7" fill="#cfe6c9"/>
<polygon points="70.1,0.0 81.5,0.0 79.9,9.8 70.1,11.4" fill="#cfe6c9"/>
<polygon points="84.8,0.0 97.8,0.0 98.6,4.9 91.3,6.5" fill="#cfe6c9"/>
<polygon points="131.3,2.4 140.2,1.6 140.2,9.8 135.3,16.3 130.4,14.7" fill="#cfe6c9"/>
<polygon points="135.3,20.4 150.0,18.8 150.0,27.7 137.0,28.5" fill="#cfe6c9"/>
<polygon points="120.7,26.1 130.4,17.9 133.7,19.6 123.9,31.0" fill="#dcebd4"/>
<polygon points="76.6,52.2 81.5,53.8 86.4,65.2 81.5,68.5 68.5,63.6 67.7,59.5 75.0,57.1" fill="#cfe6c9"/>
<polygon points="83.2,50.5 94.6,48.9 92.9,53.8 86.4,57.1" fill="#cfe6c9"/>
<polygon points="33.4,57.1 39.1,56.3 42.4,65.2 55.4,66.8 57.1,71.7 48.9,76.6 37.5,76.6 33.4,71.7" fill="#cfe6c9"/>
<polygon points="73.4,78.3 84.8,79.9 91.3,81.5 90.5,87.2 78.3,86.4" fill="#cfe6c9"/>
<polygon points="81.5,93.8 98.6,94.6 99.1,104.3 80.7,103.5" fill="#cfe6c9"/>
<polygon points="12.2,79.9 17.1,79.9 17.9,110.1 13.0,110.1" fill="#cfe6c9"/>
<polygon points="0.0,96.2 6.5,97.8 6.5,110.1 0.0,110.1" fill="#cfe6c9"/>
<polygon points="21.2,63.6 26.1,64.4 25.8,76.6 21.5,75.8" fill="#cfe6c9"/>
<polygon points="35.1,78.3 39.1,84.8 47.3,87.2 47.3,88.9 37.5,87.2 33.4,80.7" fill="#dcebd4"/>
<polygon points="21.2,4.9 27.7,3.3 29.3,14.7 22.8,16.3" fill="#e6eddf"/>
<polygon points="57.1,108.0 91.3,108.0 94.6,116.2 140.2,116.2 150.0,124.3 150.0,161.8 138.6,156.9 120.7,148.8 117.4,161.8 104.3,166.7 91.3,155.3 84.8,148.8 81.5,137.3 71.7,137.3 71.7,124.3 60.3,122.7" fill="#cfe6c9"/>
<polygon points="114.1,134.1 150.0,132.5 150.0,156.9 123.9,155.3" fill="#e4eedd"/>
<polygon points="26.9,156.1 38.3,156.1 38.3,173.2 26.9,173.2" fill="#cfe6c9"/>
<polygon points="22.8,194.4 37.5,196.0 47.3,205.8 47.3,218.1 22.8,218.1" fill="#cfe6c9"/>
<polygon points="56.3,196.9 66.0,196.9 66.0,205.8 56.3,205.8" fill="#cfe6c9"/>
<polygon points="0.0,199.3 9.8,204.2 9.8,218.1 0.0,218.1" fill="#cfe6c9"/>
<polygon points="96.2,209.1 99.5,209.1 99.8,218.1 95.9,218.1" fill="#cfe6c9"/>
<polygon points="13.0,210.7 24.5,212.3 30.2,218.1 13.0,218.1" fill="#a9d3f2"/>
<polygon points="0.0,108.0 9.8,108.0 9.8,112.9 0.0,114.5" fill="#cfe6c9"/>
<polygon points="169.6,0.0 231.5,0.0 241.3,6.5 247.8,17.9 241.3,16.3 228.3,8.2 228.3,24.5 226.6,37.5 220.1,45.7 212.0,45.7 210.3,39.1 197.3,40.8 190.8,37.5 179.3,37.5 166.3,24.5 167.9,21.2 182.6,17.9 182.6,9.8 171.2,4.9" fill="#cfe6c9"/>
<polygon points="187.5,14.7 218.5,11.4 221.7,32.6 198.9,37.5 189.1,31.0" fill="#bddcb8" opacity="0.7"/>
<polygon points="221.7,45.7 231.5,47.3 236.4,60.3 241.3,65.2 239.7,71.7 228.3,71.7 223.4,65.2 228.3,60.3 226.6,52.2" fill="#cfe6c9"/>
<polygon points="211.1,65.2 221.7,65.2 223.4,73.4 231.5,76.6 229.9,86.4 221.7,91.3 214.4,90.5 213.6,73.4" fill="#cfe6c9"/>
<polygon points="246.2,55.4 257.6,53.8 254.3,62.0 254.3,70.1 251.1,84.8 249.5,94.6 241.3,92.9 238.9,78.3 244.6,70.1 247.8,65.2 244.6,60.3" fill="#cfe6c9"/>
<polygon points="253.5,5.7 259.2,8.2 262.5,19.6 256.0,21.2" fill="#cfe6c9"/>
<polygon points="247.8,26.1 264.1,27.7 262.5,40.8 249.5,40.8" fill="#dcebd4"/>
<polygon points="254.3,63.6 262.5,65.2 260.9,75.0 254.3,73.4" fill="#dcebd4"/>
<polygon points="158.2,32.6 164.7,33.4 164.3,39.1 158.5,39.1" fill="#cfe6c9"/>
<polygon points="201.4,48.9 205.4,48.9 205.4,62.0 201.8,62.0" fill="#dcebd4"/>
<polygon points="190.8,97.8 203.8,95.4 203.8,104.3 191.6,104.3" fill="#dcebd4"/>
<polygon points="169.6,99.5 185.9,99.5 185.9,106.0 169.6,106.0" fill="#cfe6c9"/>
<polygon points="150.0,0.0 159.8,0.0 159.0,4.1 150.0,4.9" fill="#cfe6c9"/>
<polygon points="153.3,65.2 158.2,64.4 163.0,81.5 156.5,79.9" fill="#e6eddf"/>
<polygon points="158.2,140.6 169.6,139.0 171.2,134.1 176.1,137.3 179.3,153.7 190.8,152.0 193.2,178.1 189.1,179.7 182.6,173.2 159.8,173.2" fill="#cfe6c9"/>
<polygon points="182.6,130.8 192.4,129.2 203.8,130.8 203.0,138.2 185.1,139.0" fill="#cfe6c9"/>
<polygon points="208.7,130.0 221.7,130.0 218.5,136.5 210.3,136.5" fill="#cfe6c9"/>
<polygon points="194.0,144.7 202.2,143.9 203.8,156.9 196.5,158.5" fill="#cfe6c9"/>
<polygon points="203.8,140.6 208.7,141.4 207.9,145.5 203.8,145.2" fill="#cfe6c9"/>
<polygon points="178.5,112.9 190.8,111.3 190.8,122.7 186.7,123.5 185.9,117.8 178.5,120.2" fill="#cfe6c9"/>
<polygon points="224.2,114.5 228.3,114.5 227.9,127.6 224.2,127.6" fill="#dcebd4"/>
<polygon points="236.4,129.2 241.3,130.8 244.6,137.3 240.5,136.5" fill="#dcebd4"/>
<polygon points="242.9,144.7 245.4,144.7 245.4,155.3 242.9,155.3" fill="#dcebd4"/>
<polygon points="238.9,154.5 256.0,152.8 255.2,158.5 247.8,163.4 238.9,162.6" fill="#cfe6c9"/>
<polygon points="238.9,163.4 247.8,163.4 247.8,173.2 238.9,173.2" fill="#e2ecdb"/>
<polygon points="238.0,173.2 251.9,173.2 252.7,183.8 238.4,184.6" fill="#cfe6c9"/>
<polygon points="223.4,177.3 231.5,177.3 231.2,181.7 223.7,181.7" fill="#cfe6c9"/>
<polygon points="223.4,172.4 230.7,171.6 231.5,176.5 223.4,176.5" fill="#fafafa"/>
<polygon points="257.6,186.3 260.9,186.3 270.7,197.7 268.2,203.4 264.1,200.9" fill="#cfe6c9"/>
<polygon points="168.8,178.1 173.6,178.1 174.5,189.5 170.4,188.7" fill="#cfe6c9"/>
<polygon points="312.2,62.0 325.3,62.0 325.3,65.2 333.4,65.2 333.4,71.7 325.3,71.7 324.5,69.3 312.2,69.3" fill="#cfe6c9"/>
<polygon points="388.0,87.2 399.5,87.2 399.5,94.2 388.0,94.2" fill="#cfe6c9"/>
<polygon points="355.4,14.7 368.5,13.9 379.9,24.5 378.3,40.8 368.5,44.0 365.2,29.3 356.3,26.1" fill="#eaf0e3"/>
<polygon points="401.1,16.3 423.9,9.8 450.0,9.8 450.0,29.3 414.1,29.3 402.7,26.1" fill="#e6eddf"/>
<polygon points="562.7,50.5 574.1,50.5 574.1,57.1 562.7,57.1" fill="#d6e8cd"/>
<polygon points="546.4,57.9 557.8,57.9 557.8,62.0 546.4,62.0" fill="#d6e8cd"/>
<polygon points="564.3,74.2 574.1,74.2 574.1,78.3 564.3,78.3" fill="#d6e8cd"/>
<polygon points="530.1,84.8 574.1,83.2 574.1,92.9 530.1,93.8" fill="#dceadb"/>
<polygon points="517.0,114.5 574.1,112.9 574.1,129.2 533.3,130.8 517.9,122.7" fill="#d6e8cd"/>
<polygon points="520.3,144.7 528.5,144.7 528.5,149.6 520.3,149.6" fill="#d3e7ca"/>
<polygon points="539.9,205.8 548.0,205.8 548.0,218.1 539.9,218.1" fill="#d3e7ca"/>
<polygon points="564.3,198.5 574.1,198.5 574.1,205.8 564.3,205.8" fill="#d3e7ca"/>
<polygon points="517.9,132.5 526.8,130.8 525.2,137.3 517.9,138.2" fill="#d6e8cd"/>
<polygon points="108.4,5.7 113.3,5.2 113.0,6.8 108.8,7.3" fill="#b4d6f2"/>
<polygon points="118.2,29.3 121.5,27.7 122.0,30.2 118.7,31.8" fill="#b4d6f2"/>
<polygon points="19.6,71.7 24.5,71.7 23.6,77.4 20.4,76.6" fill="#b4d6f2"/>
<polygon points="31.0,74.7 34.2,75.0 33.9,76.6 31.0,76.3" fill="#b4d6f2"/>
<polygon points="280.4,98.2 283.4,98.2 283.4,100.8 280.4,100.8" fill="#b4d6f2"/>
<polygon points="345.7,89.3 349.7,88.9 347.3,93.3 344.8,93.3" fill="#b4d6f2"/>
<polygon points="405.2,79.9 407.6,80.7 408.4,84.0 406.0,83.2" fill="#b4d6f2"/>
<polygon points="392.9,26.1 396.2,27.7 397.0,30.2 393.8,28.5" fill="#b4d6f2"/>
<polygon points="423.9,40.8 426.4,40.8 426.4,43.2 423.9,43.2" fill="#b4d6f2"/>
<polygon points="407.6,149.6 410.1,149.6 410.1,152.0 407.6,152.0" fill="#b4d6f2"/>
<polygon points="388.9,159.8 394.6,157.2 394.9,158.5 389.3,161.8" fill="#b4d6f2"/>
<polygon points="445.9,204.2 447.6,204.2 449.2,209.1 447.6,209.1" fill="#b4d6f2"/>
<polygon points="545.6,26.9 550.5,27.7 548.8,34.2 547.2,31.0" fill="#b4d6f2"/>
<polygon points="553.7,4.9 556.2,4.9 558.6,14.7 557.0,14.7" fill="#b4d6f2"/>
<polygon points="491.8,59.5 493.4,59.5 495.0,66.0 493.4,66.0" fill="#b4d6f2"/>
<polygon points="499.9,61.1 502.4,61.1 500.7,66.8 499.4,66.0" fill="#b4d6f2"/>
<polygon points="474.7,76.6 477.9,77.0 477.6,79.1 475.0,79.1" fill="#b4d6f2"/>
<polygon points="499.1,99.5 502.4,100.3 503.2,104.3 500.7,103.5" fill="#b4d6f2"/>
<polygon points="505.6,79.9 508.9,80.7 508.1,85.6 506.0,84.8" fill="#b4d6f2"/>
<polygon points="485.3,68.5 487.7,68.5 487.7,70.4 485.3,70.4" fill="#b4d6f2"/>
<polygon points="498.3,108.0 500.7,108.0 501.6,114.5 499.4,114.5" fill="#b4d6f2"/>
<polygon points="503.2,121.9 507.3,121.9 506.9,124.3 503.2,124.3" fill="#b4d6f2"/>
<polygon points="469.8,145.5 476.3,141.4 477.1,144.7 472.2,148.8" fill="#b4d6f2"/>
<polygon points="462.4,159.4 468.1,158.9 467.8,162.1 462.4,162.6" fill="#b4d6f2"/>
<polygon points="530.9,164.3 536.6,162.6 535.8,166.7 531.4,167.0" fill="#b4d6f2"/>
<polygon points="522.8,176.5 525.2,176.5 528.5,181.4 526.0,181.4" fill="#b4d6f2"/>
<polygon points="561.9,146.3 569.2,142.2 569.5,148.8 562.7,150.1" fill="#b4d6f2"/>
<polygon points="557.8,122.7 561.9,121.9 561.4,125.1 558.1,125.6" fill="#b4d6f2"/>
<polygon points="485.3,192.0 487.4,192.0 488.5,196.9 486.4,196.9" fill="#b4d6f2"/>
<polygon points="503.2,194.4 504.8,194.4 504.8,199.3 503.2,199.3" fill="#b4d6f2"/>
<polygon points="542.3,205.8 545.6,205.8 547.2,217.2 543.9,217.2" fill="#b4d6f2"/>
<polygon points="496.7,162.6 499.9,162.6 499.9,164.7 496.7,164.7" fill="#b4d6f2"/>
<polygon points="490.1,175.7 492.6,175.7 492.9,178.4 490.5,178.4" fill="#b4d6f2"/>
<polygon points="528.5,143.9 533.3,144.7 533.0,146.8 528.8,146.3" fill="#b4d6f2"/>
<polygon points="486.9,132.5 491.8,133.3 491.4,136.5 487.2,135.7" fill="#f4f6f1"/>
<polygon points="509.7,125.1 513.8,125.1 513.5,128.4 509.7,128.4" fill="#f4f6f1"/>
<polygon points="546.4,141.4 552.1,142.2 551.8,144.7 546.7,144.2" fill="#f4f6f1"/>
<polygon points="552.1,152.0 557.0,152.8 556.2,156.1 552.4,155.6" fill="#f4f6f1"/>
<polygon points="562.7,74.2 567.6,75.0 567.3,77.0 563.0,76.6" fill="#f4f6f1"/>
<polygon points="552.1,194.4 556.2,194.4 557.8,199.3 553.7,199.3" fill="#f4f6f1"/>
<polygon points="533.3,113.7 538.2,113.7 537.9,117.0 533.7,117.0" fill="#f4f6f1"/>
<polygon points="521.9,110.4 525.2,110.4 525.2,113.7 521.9,113.7" fill="#f4f6f1"/>
<polygon points="558.6,132.5 562.7,134.1 561.9,138.2 558.6,137.0" fill="#f4f6f1"/>
<polygon points="528.5,207.5 532.5,208.3 532.0,212.3 528.8,211.7" fill="#f4f6f1"/>
</g>
<g filter="url(#mb1)">
<polyline points="31.5,0.0 31.5,70.1" fill="none" stroke="#b4b2ad" stroke-width="0.6" stroke-linejoin="round" stroke-linecap="round" stroke-dasharray="1 1.1" opacity="0.62"/>
<polyline points="31.5,48.6 150.0,48.6" fill="none" stroke="#b4b2ad" stroke-width="0.6" stroke-linejoin="round" stroke-linecap="round" stroke-dasharray="1 1.1" opacity="0.62"/>
<polyline points="150.0,48.6 300.0,48.6" fill="none" stroke="#b4b2ad" stroke-width="0.6" stroke-linejoin="round" stroke-linecap="round" stroke-dasharray="1 1.1" opacity="0.62"/>
<polyline points="300.0,48.6 450.0,48.6" fill="none" stroke="#b4b2ad" stroke-width="0.6" stroke-linejoin="round" stroke-linecap="round" stroke-dasharray="1 1.1" opacity="0.62"/>
<polyline points="429.0,48.6 526.8,48.6" fill="none" stroke="#b4b2ad" stroke-width="0.6" stroke-linejoin="round" stroke-linecap="round" stroke-dasharray="1 1.1" opacity="0.62"/>
<polyline points="158.2,0.0 158.2,110.1" fill="none" stroke="#b4b2ad" stroke-width="0.6" stroke-linejoin="round" stroke-linecap="round" stroke-dasharray="1 1.1" opacity="0.62"/>
<polyline points="158.2,108.0 158.2,218.1" fill="none" stroke="#b4b2ad" stroke-width="0.6" stroke-linejoin="round" stroke-linecap="round" stroke-dasharray="1 1.1" opacity="0.62"/>
<polyline points="336.2,0.0 336.2,48.6" fill="none" stroke="#b4b2ad" stroke-width="0.6" stroke-linejoin="round" stroke-linecap="round" stroke-dasharray="1 1.1" opacity="0.62"/>
<polyline points="311.7,48.6 311.7,110.1" fill="none" stroke="#b4b2ad" stroke-width="0.6" stroke-linejoin="round" stroke-linecap="round" stroke-dasharray="1 1.1" opacity="0.62"/>
<polyline points="311.1,108.0 311.1,202.6 300.0,202.6" fill="none" stroke="#b4b2ad" stroke-width="0.6" stroke-linejoin="round" stroke-linecap="round" stroke-dasharray="1 1.1" opacity="0.62"/>
<polyline points="221.7,202.6 300.0,202.6" fill="none" stroke="#b4b2ad" stroke-width="0.6" stroke-linejoin="round" stroke-linecap="round" stroke-dasharray="1 1.1" opacity="0.62"/>
<polyline points="311.7,64.4 388.4,64.4 388.4,110.1" fill="none" stroke="#b4b2ad" stroke-width="0.6" stroke-linejoin="round" stroke-linecap="round" stroke-dasharray="1 1.1" opacity="0.62"/>
<polyline points="388.4,108.0 388.4,124.3 396.2,130.0 404.3,129.2 409.2,134.9 417.4,137.3 425.5,139.0 435.3,137.3 440.2,144.7 450.0,143.1" fill="none" stroke="#b4b2ad" stroke-width="0.6" stroke-linejoin="round" stroke-linecap="round" stroke-dasharray="1 1.1" opacity="0.62"/>
<polyline points="429.0,136.5 438.8,143.1 450.2,143.9 460.0,146.3 469.8,147.1 481.2,151.2 494.2,146.3 500.7,144.2 510.5,145.2 520.3,150.4 530.1,155.3 539.9,156.9" fill="none" stroke="#b4b2ad" stroke-width="0.6" stroke-linejoin="round" stroke-linecap="round" stroke-dasharray="1 1.1" opacity="0.62"/>
<polyline points="526.3,0.0 526.3,70.1 529.3,91.3 528.8,110.1" fill="none" stroke="#b4b2ad" stroke-width="0.6" stroke-linejoin="round" stroke-linecap="round" stroke-dasharray="1 1.1" opacity="0.62"/>
<polyline points="529.3,108.0 529.3,155.3" fill="none" stroke="#b4b2ad" stroke-width="0.6" stroke-linejoin="round" stroke-linecap="round" stroke-dasharray="1 1.1" opacity="0.62"/>
<polyline points="539.9,156.9 539.9,205.8" fill="none" stroke="#b4b2ad" stroke-width="0.6" stroke-linejoin="round" stroke-linecap="round" stroke-dasharray="1 1.1" opacity="0.62"/>
<polyline points="539.9,172.4 574.1,172.4" fill="none" stroke="#b4b2ad" stroke-width="0.6" stroke-linejoin="round" stroke-linecap="round" stroke-dasharray="1 1.1" opacity="0.62"/>
<polyline points="533.3,64.1 574.4,64.1" fill="none" stroke="#b4b2ad" stroke-width="0.6" stroke-linejoin="round" stroke-linecap="round" stroke-dasharray="1 1.1" opacity="0.62"/>
<polyline points="14.7,108.0 21.2,121.0 28.5,134.1 17.9,150.4 15.5,161.8 21.2,173.2 16.3,180.6" fill="none" stroke="#b4b2ad" stroke-width="0.6" stroke-linejoin="round" stroke-linecap="round" stroke-dasharray="1 1.1" opacity="0.62"/>
<polyline points="9.8,184.6 6.5,196.0 11.4,209.1" fill="none" stroke="#b4b2ad" stroke-width="0.6" stroke-linejoin="round" stroke-linecap="round" stroke-dasharray="1 1.1" opacity="0.62"/>
<polyline points="0.0,97.8 9.8,104.3 17.9,110.1" fill="none" stroke="#b4b2ad" stroke-width="0.6" stroke-linejoin="round" stroke-linecap="round" stroke-dasharray="1 1.1" opacity="0.62"/>
<polyline points="0.0,182.2 14.7,181.0 12.2,187.9 96.2,217.2" fill="none" stroke="#9a9a9a" stroke-width="0.7" stroke-linejoin="round" stroke-linecap="round"/>
<polyline points="179.3,218.1 179.3,209.4 221.7,209.4 231.5,218.1" fill="none" stroke="#8a8a8a" stroke-width="0.7" stroke-linejoin="round" stroke-linecap="round"/>
<polyline points="68.5,0.0 66.8,9.8 60.3,21.2 53.8,31.0 47.3,42.4 35.9,50.5 22.8,56.3 11.4,63.6 3.3,75.0 0.0,84.8" fill="none" stroke="#f7d97c" stroke-width="1.8199999999999998" stroke-linejoin="round" stroke-linecap="round"/>
<polyline points="3.3,76.6 13.0,81.5" fill="none" stroke="#f7d97c" stroke-width="1.56" stroke-linejoin="round" stroke-linecap="round"/>
<polyline points="29.3,104.3 29.3,110.1" fill="none" stroke="#f7d97c" stroke-width="1.56" stroke-linejoin="round" stroke-linecap="round"/>
<polyline points="0.0,117.0 16.3,115.3 19.6,120.2 29.3,118.6 30.2,108.0" fill="none" stroke="#f7d97c" stroke-width="1.56" stroke-linejoin="round" stroke-linecap="round"/>
<polyline points="0.0,152.0 31.0,152.0 48.9,155.3 65.2,157.7 79.9,157.7" fill="none" stroke="#f7d97c" stroke-width="1.56" stroke-linejoin="round" stroke-linecap="round"/>
<polyline points="79.9,157.7 79.9,137.3 81.5,125.9 92.9,117.8 92.1,108.0" fill="none" stroke="#f7d97c" stroke-width="1.56" stroke-linejoin="round" stroke-linecap="round"/>
<polyline points="0.0,179.7 16.3,182.2 32.6,182.2 48.9,176.5 65.2,174.8 91.3,178.1" fill="none" stroke="#f7d97c" stroke-width="1.56" stroke-linejoin="round" stroke-linecap="round"/>
<polyline points="81.5,159.4 91.3,178.1 104.3,189.5 109.2,196.9 108.4,205.8 107.6,218.1" fill="none" stroke="#f7d97c" stroke-width="1.56" stroke-linejoin="round" stroke-linecap="round"/>
<polyline points="109.2,202.6 127.2,204.2 138.6,192.8 150.0,192.0" fill="none" stroke="#f7d97c" stroke-width="1.56" stroke-linejoin="round" stroke-linecap="round"/>
<polyline points="47.3,218.1 57.1,209.1 62.0,207.5 63.6,218.1" fill="none" stroke="#f7d97c" stroke-width="1.1700000000000002" stroke-linejoin="round" stroke-linecap="round"/>
<polyline points="0.0,205.8 4.9,212.3 5.7,218.1" fill="none" stroke="#f7d97c" stroke-width="1.1700000000000002" stroke-linejoin="round" stroke-linecap="round"/>
<polyline points="91.3,205.8 97.8,199.3" fill="none" stroke="#f7d97c" stroke-width="1.1700000000000002" stroke-linejoin="round" stroke-linecap="round"/>
<polyline points="270.7,0.0 271.5,8.2 265.8,21.2 269.0,32.6 273.9,40.8 275.5,52.2 271.5,65.2 269.8,78.3 262.5,86.4 256.0,91.3 252.7,98.6 246.2,97.8 239.7,93.8 236.4,92.1 226.6,97.8 220.9,104.3 220.9,110.1" fill="none" stroke="#f7d97c" stroke-width="1.8199999999999998" stroke-linejoin="round" stroke-linecap="round"/>
<polyline points="219.3,111.3 216.0,124.3 213.6,143.9 205.4,155.3 203.0,166.7 203.8,178.1 210.3,183.0 216.8,192.8 221.7,204.2 226.6,214.0 231.5,218.1" fill="none" stroke="#f7d97c" stroke-width="1.8199999999999998" stroke-linejoin="round" stroke-linecap="round"/>
<polyline points="150.0,194.4 159.8,196.0 166.3,192.8 176.1,196.9 198.9,194.4 216.8,193.6" fill="none" stroke="#f7d97c" stroke-width="1.56" stroke-linejoin="round" stroke-linecap="round"/>
<polyline points="198.9,218.1 215.2,214.0 226.6,214.0" fill="none" stroke="#f7d97c" stroke-width="1.1700000000000002" stroke-linejoin="round" stroke-linecap="round"/>
<polyline points="339.9,108.0 340.8,117.8 344.0,134.1 340.8,142.2 341.3,156.9" fill="none" stroke="#f7d97c" stroke-width="1.56" stroke-linejoin="round" stroke-linecap="round"/>
<polyline points="443.5,108.0 428.8,120.2 428.0,132.5 424.7,139.0 425.9,145.5" fill="none" stroke="#f7d97c" stroke-width="1.56" stroke-linejoin="round" stroke-linecap="round"/>
<polyline points="300.0,218.1 313.0,215.6 340.8,198.5 365.2,191.2 383.2,187.9 397.8,189.5 417.4,191.2 438.6,182.2 450.0,179.7" fill="none" stroke="#f7d97c" stroke-width="1.8199999999999998" stroke-linejoin="round" stroke-linecap="round"/>
<polyline points="339.1,107.6 339.6,110.1" fill="none" stroke="#f7d97c" stroke-width="1.56" stroke-linejoin="round" stroke-linecap="round"/>
<polyline points="365.2,106.0 366.0,107.6" fill="none" stroke="#f7d97c" stroke-width="1.56" stroke-linejoin="round" stroke-linecap="round"/>
<polyline points="448.6,0.0 449.4,6.5 455.9,16.3 455.9,27.7 455.9,78.3 450.2,97.8" fill="none" stroke="#f7d97c" stroke-width="1.6900000000000002" stroke-linejoin="round" stroke-linecap="round"/>
<polyline points="531.7,0.0 532.0,19.6 533.3,29.3 531.7,46.5 530.1,57.1" fill="none" stroke="#f7d97c" stroke-width="1.6900000000000002" stroke-linejoin="round" stroke-linecap="round"/>
<polyline points="574.4,28.5 567.6,38.3 552.9,42.4 533.3,46.5 520.3,50.5 505.6,65.2 491.0,75.8 476.3,86.4 461.6,91.3 450.2,97.8" fill="none" stroke="#f7d97c" stroke-width="1.6900000000000002" stroke-linejoin="round" stroke-linecap="round"/>
<polyline points="539.9,94.6 554.5,97.0 574.1,106.8" fill="none" stroke="#f7d97c" stroke-width="1.6900000000000002" stroke-linejoin="round" stroke-linecap="round"/>
<polyline points="450.2,97.8 442.0,107.6 438.8,110.1" fill="none" stroke="#f7d97c" stroke-width="1.56" stroke-linejoin="round" stroke-linecap="round"/>
<polyline points="530.1,99.5 531.7,104.3" fill="none" stroke="#f7d97c" stroke-width="2.6" stroke-linejoin="round" stroke-linecap="round"/>
<polyline points="454.3,108.0 460.0,124.3 460.3,168.3 455.1,179.7 461.6,202.6 461.6,217.2" fill="none" stroke="#f7d97c" stroke-width="1.6900000000000002" stroke-linejoin="round" stroke-linecap="round"/>
<polyline points="429.0,120.2 438.8,111.3 443.7,108.0" fill="none" stroke="#f7d97c" stroke-width="1.56" stroke-linejoin="round" stroke-linecap="round"/>
<polyline points="429.0,187.9 445.3,181.4 469.8,180.6 494.2,186.3 520.3,188.7 546.4,187.9 574.1,186.3" fill="none" stroke="#f7d97c" stroke-width="1.6900000000000002" stroke-linejoin="round" stroke-linecap="round"/>
<polyline points="473.0,179.7 486.1,169.1 513.8,167.5 528.5,158.5 539.9,157.7 552.9,150.4 564.3,137.3 574.1,125.9" fill="none" stroke="#f7d97c" stroke-width="1.6900000000000002" stroke-linejoin="round" stroke-linecap="round"/>
<polyline points="539.9,157.7 543.9,173.2 545.6,187.9 552.9,200.9 566.0,214.0 570.8,218.1" fill="none" stroke="#f7d97c" stroke-width="1.6900000000000002" stroke-linejoin="round" stroke-linecap="round"/>
<polyline points="469.8,180.6 473.0,192.8 481.2,205.8 486.9,218.1" fill="none" stroke="#f7d97c" stroke-width="1.6900000000000002" stroke-linejoin="round" stroke-linecap="round"/>
<polyline points="469.8,180.6 467.3,196.0 461.6,202.6" fill="none" stroke="#f7d97c" stroke-width="1.56" stroke-linejoin="round" stroke-linecap="round"/>
<polyline points="453.5,179.7 460.0,173.2 469.8,173.2 476.3,179.7 469.8,184.6 458.3,183.8 453.5,179.7" fill="none" stroke="#f7d97c" stroke-width="1.1700000000000002" stroke-linejoin="round" stroke-linecap="round"/>
</g>
<g font-family="Liberation Sans, sans-serif" filter="url(#mb2)">
<g font-size="5" fill="#8d92a0" letter-spacing="1.1">
<text x="76.3" y="134.6" textLength="29.7">ARIZONA</text>
<text x="214.4" y="140.6" textLength="42.7">NEW MEXICO</text>
<text x="437.2" y="91" textLength="38.8">OKLAHOMA</text>
<text x="415" y="2.4" textLength="27">KANSAS</text>
<text x="400.8" y="218.9" textLength="20.7">TEXAS</text>
<text x="561.9" y="8.5" textLength="12.1">MIS</text>
<text x="563.5" y="122.3" textLength="12">ARK</text>
</g>
<g font-size="6.6" fill="#3c3c3c" stroke="#f2efe9" stroke-width="0.0">
<text x="0.2" y="71.7" textLength="20.2">Vegas</text>
<text x="38.8" y="100.4" textLength="28.4">Kingman</text>
<text x="69.3" y="167.2" textLength="24.9">Phoenix</text>
<text x="97.8" y="204.2" textLength="23.7">Tucson</text>
<text x="225.3" y="212" textLength="24.5">El Paso</text>
<text x="459.7" y="175.7" textLength="19">Dallas</text>
<text x="535.3" y="66.9" textLength="20.9">Gentry</text>
</g>
<g fill="#f2efe9" stroke="#444" stroke-width="0.6">
<circle cx="4.1" cy="75" r="0.9"/><circle cx="81" cy="158.9" r="0.9"/><circle cx="109.6" cy="196.5" r="0.9"/><circle cx="223" cy="209.4" r="0.9"/><circle cx="469.8" cy="179.4" r="0.9"/>
</g>
</g>
<g filter="url(#mb2)">
<polyline points="29.0,106.3 45.0,106.2 50.0,104.5 55.5,102.2 60.0,101.8 66.0,103.0 78.0,101.8 85.0,102.8 92.0,104.8 105.0,107.5 118.0,111.0 130.0,114.3 137.0,112.0 150.0,105.0 157.0,101.0 162.0,96.0 165.0,94.0 173.0,94.6 181.0,97.5 186.0,99.8 187.5,105.0 189.0,108.0 199.0,111.3 210.0,111.0 218.5,110.2 231.5,112.9 250.0,114.0 264.0,114.5 280.0,111.5 294.0,107.5 300.0,106.6 309.8,105.2 321.2,102.4 337.5,104.4 342.4,103.0 368.5,103.5 394.6,104.4 401.1,99.5 414.1,97.0 430.4,95.4 450.0,96.4 477.9,97.8 507.3,97.0 530.1,97.5 534.8,96.3 536.2,93.0 536.3,68.5" fill="none" stroke="#88c57f" stroke-width="4.0" stroke-linejoin="round" stroke-linecap="round" opacity="0.93"/>
<polyline points="504.8,1.3 485.3,2.9 473.0,16.3 455.9,27.7 455.9,78.3 450.2,97.8 455.1,110.1 460.0,124.3 460.3,168.3 455.1,179.7 461.6,202.6 461.6,218.1" fill="none" stroke="#2b5db6" stroke-width="3.0" stroke-linejoin="round" stroke-dasharray="9.4 5"/>
<circle cx="448.9" cy="86.3" r="17.6" fill="#5c6472" opacity="0.34"/>
<path d="M448.2 86.4 L452.2 86.9 L451.8 98.4 Z" fill="#1b60d3"/>
<circle cx="447.8" cy="81.3" r="6.5" fill="#1b60d3"/>
<path d="M444 82.3 A4 4 0 0 1 448.3 77.6" fill="none" stroke="#a9c8f7" stroke-width="0.9" stroke-linecap="round"/>
<g transform="translate(31.5,96.2)"><path d="M0 8.3 C -1.2 5.5 -5.4 3.6 -5.4 -0.2 A5.4 5.4 0 1 1 5.4 -0.2 C 5.4 3.6 1.2 5.5 0 8.3Z" fill="#e8453c"/>
<path d="M-3.4 -2.3 v4.2 h0.9 v-1.1 h5 v1.1 h0.9 v-2.6 q0 -1.4 -1.4 -1.4 h-2.3 v2 h-2.2 v-2.2z M-1.9 -1.9 a0.8 0.8 0 1 0 0.01 0z" fill="#fff"/></g>
<g transform="translate(528.1,62.9)"><path d="M0 8.3 C -1.2 5.5 -5.4 3.6 -5.4 -0.2 A5.4 5.4 0 1 1 5.4 -0.2 C 5.4 3.6 1.2 5.5 0 8.3Z" fill="#e8453c"/>
<path d="M-3.4 -2.3 v4.2 h0.9 v-1.1 h5 v1.1 h0.9 v-2.6 q0 -1.4 -1.4 -1.4 h-2.3 v2 h-2.2 v-2.2z M-1.9 -1.9 a0.8 0.8 0 1 0 0.01 0z" fill="#fff"/></g>
</g>
</g></svg>
</body></html>
